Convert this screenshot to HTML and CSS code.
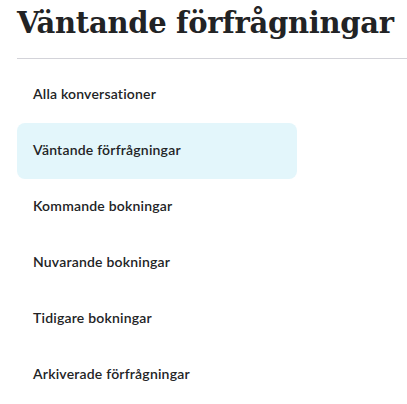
FILE: index.html
```html
<!DOCTYPE html>
<html lang="sv">
<head>
<meta charset="utf-8">
<link rel="stylesheet" href="styles.css">
</head>
<body>
<div class="page">
  <h1 class="title">Väntande förfrågningar</h1>
  <hr class="divider">
  <nav class="menu">
    <a class="item">Alla konversationer</a>
    <a class="item active">Väntande förfrågningar</a>
    <a class="item">Kommande bokningar</a>
    <a class="item">Nuvarande bokningar</a>
    <a class="item">Tidigare bokningar</a>
    <a class="item">Arkiverade förfrågningar</a>
  </nav>
</div>
</body>
</html>
```
FILE: styles.css
```css
html, body {
  margin: 0;
  padding: 0;
  background: #ffffff;
}
.page {
  padding: 0 0 0 17px;
}
.title {
  margin: 0;
  height: 58px;
  box-sizing: border-box;
  padding-top: 5px;
  font-family: "DejaVu Serif", serif;
  font-weight: bold;
  font-size: 29px;
  line-height: 36px;
  color: #222325;
  letter-spacing: -0.3px;
  white-space: nowrap;
}
.divider {
  margin: 0 0 8px 0;
  border: 0;
  height: 1px;
  background: #d3d3d9;
}
.menu {
  display: flex;
  flex-direction: column;
  width: 280px;
}
.item {
  display: flex;
  align-items: center;
  height: 56px;
  box-sizing: border-box;
  padding: 0 0 4px 16px;
  border-radius: 8px;
  font-family: Lato, sans-serif;
  font-weight: 600;
  font-size: 14px;
  letter-spacing: 0.2px;
  color: #222325;
}
.item.active {
  background: #e3f6fb;
}
```
